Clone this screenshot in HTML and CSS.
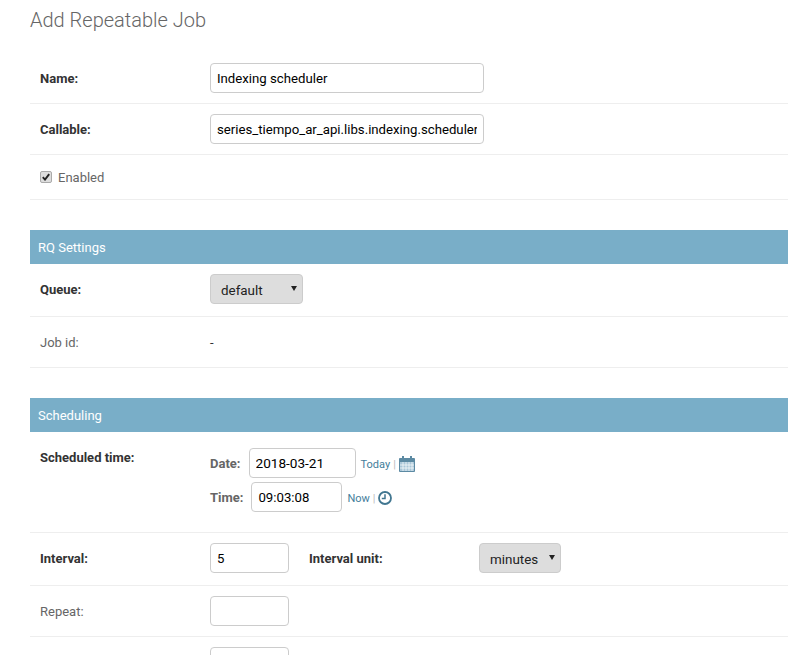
FILE: index.html
```html
<!DOCTYPE html>
<html lang="en">
<head>
    <meta charset="UTF-8">
    <meta name="viewport" content="width=device-width, initial-scale=1.0">
    <title>Add Repeatable Job</title>
    <link rel="stylesheet" href="styles.css">
</head>
<body>
    <div class="content">
        <h1>Add Repeatable Job</h1>

        <fieldset>
            <div class="row">
                <label class="required">Name:</label>
                <input class="text-long" type="text" value="Indexing scheduler">
            </div>
            <div class="row">
                <label class="required">Callable:</label>
                <input class="text-long" type="text" value="series_tiempo_ar_api.libs.indexing.scheduler">
            </div>
            <div class="row row-check">
                <span class="check"><svg width="8" height="8" viewBox="0 0 8 8"><path d="M0.8 4.2 L3 6.6 L7.2 1.2" fill="none" stroke="#222" stroke-width="1.9"/></svg></span>
                <label>Enabled</label>
            </div>
        </fieldset>

        <fieldset>
            <h2>RQ Settings</h2>
            <div class="row row-select">
                <label class="required">Queue:</label>
                <span class="select-wrap"><select class="queue"><option>default</option></select></span>
            </div>
            <div class="row row-read">
                <label>Job id:</label>
                <span class="readonly">-</span>
            </div>
        </fieldset>

        <fieldset>
            <h2>Scheduling</h2>
            <div class="row row-datetime">
                <label class="required">Scheduled time:</label>
                <div class="datetime">
                    <p>
                        <span class="dt-label">Date:</span>
                        <input class="date" type="text" value="2018-03-21">
                        <a class="shortcut">Today</a><span class="sep">|</span>
                        <svg class="cal" width="16" height="16" viewBox="0 0 16 16">
                            <path d="M0.5 2.5h15v13h-15z" fill="#a9c6d8" stroke="#5c8aa3" stroke-width="1"/>
                            <path d="M1 3h14v3H1z" fill="#5c8aa3"/>
                            <path d="M4 6v9M7 6v9M10 6v9M13 6v9M1 9h14M1 12h14" stroke="#fff" stroke-width="0.7"/>
                            <path d="M4 0v3.5M12 0v3.5" stroke="#5c8aa3" stroke-width="2"/>
                        </svg>
                    </p>
                    <p>
                        <span class="dt-label">Time:</span>
                        <input class="time" type="text" value="09:03:08">
                        <a class="shortcut">Now</a><span class="sep">|</span>
                        <svg class="clock" width="14" height="14" viewBox="0 0 14 14">
                            <circle cx="7" cy="7" r="6" fill="#fff" stroke="#417690" stroke-width="1.8"/>
                            <path d="M7 3.2V7.6H3.8" fill="none" stroke="#417690" stroke-width="1.5"/>
                        </svg>
                    </p>
                </div>
            </div>
            <div class="row row-select">
                <label class="required">Interval:</label>
                <input class="short" type="text" value="5">
                <label class="required inline-label">Interval unit:</label>
                <span class="select-wrap"><select class="unit"><option>minutes</option></select></span>
            </div>
            <div class="row">
                <label>Repeat:</label>
                <input class="short" type="text">
            </div>
            <div class="row">
                <label></label>
                <input class="short" type="text">
            </div>
        </fieldset>
    </div>
</body>
</html>
```

FILE: styles.css
```css
html, body {
    height: 655px;
    overflow: hidden;
}

body {
    margin: 0;
    background: #fff;
    color: #333;
    font-family: Roboto, "Liberation Sans", sans-serif;
    font-size: 13px;
}

.content {
    padding-left: 30px;
}

h1 {
    margin: 0;
    height: 53px;
    padding-top: 8px;
    box-sizing: border-box;
    font-size: 20px;
    font-weight: 300;
    line-height: 24px;
    color: #666;
}

fieldset {
    margin: 0 0 30px;
    padding: 0;
    border: 0;
    min-width: 0;
}

h2 {
    margin: 0;
    padding: 1px 8px 0;
    height: 33px;
    line-height: 33px;
    background: #79aec8;
    color: #fff;
    font-size: 13px;
    font-weight: 400;
}

.row {
    display: flex;
    align-items: center;
    padding: 10px;
    height: 30px;
    border-bottom: 1px solid #eee;
}

.row label {
    width: 170px;
    flex: none;
    color: #666;
}

.row label.required {
    color: #333;
    font-weight: 700;
}

input[type="text"] {
    box-sizing: border-box;
    height: 30px;
    margin: 0;
    padding: 5px 6px;
    border: 1px solid #ccc;
    border-radius: 4px;
    background: #fff;
    color: #000;
    font-family: Roboto, "Liberation Sans", sans-serif;
    font-size: 13.2px;
}

.text-long {
    width: 274px;
}

.short {
    width: 79px;
}

/* arrow is drawn on the wrapper, the native one is too big */
.select-wrap {
    position: relative;
    display: block;
    height: 30px;
}

.select-wrap::after {
    content: "";
    position: absolute;
    top: 12px;
    right: 6px;
    border-left: 3px solid transparent;
    border-right: 3px solid transparent;
    border-top: 5px solid #222;
}

select {
    appearance: none;
    display: block;
    box-sizing: border-box;
    height: 30px;
    margin: 0;
    padding: 7px 6px 5px 10px;
    border: 1px solid #ccc;
    border-radius: 4px;
    background-color: #ddd;
    color: #222;
    font-family: Roboto, "Liberation Sans", sans-serif;
    font-size: 13.4px;
}

.queue {
    width: 93px;
}

.unit {
    width: 82px;
}

.row-check {
    height: 24px;
    gap: 6px;
}

.row-check label {
    width: auto;
}

.check {
    box-sizing: border-box;
    display: flex;
    align-items: center;
    justify-content: center;
    width: 12px;
    height: 12px;
    border: 1px solid #aaa;
    border-radius: 2px;
    background: #ddd;
}

.row-select {
    padding-bottom: 12px;
}

.readonly {
    color: #333;
}

.row-datetime {
    height: auto;
    align-items: flex-start;
    padding: 16px 10px 20px;
}

.row-datetime > label {
    margin-top: 2px;
}

.datetime p {
    display: flex;
    align-items: center;
    height: 30px;
    margin: 0 0 4px;
}

.datetime p:last-child {
    margin-bottom: 0;
}

.dt-label {
    font-weight: 700;
    color: #666;
    margin-right: 8px;
}

.date {
    width: 107px;
    font-size: 13.6px !important;
}

.time {
    width: 91px;
}

.shortcut {
    margin-left: 5px;
    padding-top: 2px;
    color: #447e9b;
    font-size: 11px;
}

.sep {
    margin: 0 3px;
    padding-top: 2px;
    color: #bbb;
    font-size: 11px;
}

.cal, .clock {
    margin-top: 2px;
}

.clock {
    margin-left: -1px;
}

.inline-label {
    margin-left: 20px;
}
```
